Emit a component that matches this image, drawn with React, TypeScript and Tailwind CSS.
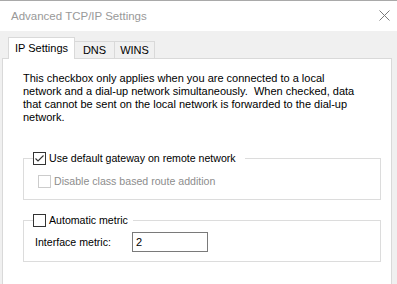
import React from "react";

function Check({ checked, disabled }: { checked?: boolean; disabled?: boolean }) {
  return (
    <span
      className={
        "inline-block w-[13px] h-[13px] shrink-0 border bg-white " +
        (disabled ? "border-[#cccccc]" : "border-[#333333]")
      }
    >
      {checked && (
        <svg width="11" height="11" viewBox="0 0 11 11" className="block">
          <path d="M1.5 5.5 L4 8 L9.5 2.5" fill="none" stroke="#333333" strokeWidth="1.1" />
        </svg>
      )}
    </span>
  );
}

export default function App() {
  return (
    <div
      className="w-[397px] h-[284px] overflow-hidden bg-[#f0f0f0] text-[11px] leading-[13px] text-black"
      style={{ fontFamily: '"Liberation Sans", Arial, sans-serif' }}
    >
      {/* title bar */}
      <div className="h-[31px] bg-white border-t border-[#a9a9a9] flex items-center justify-between pl-[11px] pr-[7px]">
        <span className="text-[11.5px] text-[#999999]">Advanced TCP/IP Settings</span>
        <svg width="11" height="11" viewBox="0 0 11 11" className="mb-[1px]">
          <path d="M0.5 0.5 L10.5 10.5 M10.5 0.5 L0.5 10.5" stroke="#7a7a7a" strokeWidth="1" />
        </svg>
      </div>

      {/* tabs */}
      <div className="mt-[6px] pl-[8px] flex items-end h-[21px]">
        <div className="relative z-10 -mb-[1px] h-[22px] w-[67px] bg-white border border-b-0 border-[#d9d9d9] flex items-center justify-center pb-[1px]">
          IP Settings
        </div>
        <div className="h-[17px] w-[40px] border-t border-r border-[#d9d9d9] flex items-center justify-center">
          DNS
        </div>
        <div className="h-[17px] w-[40px] border-t border-r border-[#d9d9d9] flex items-center justify-center">
          WINS
        </div>
      </div>

      {/* panel */}
      <div className="ml-[2px] w-[390px] h-[240px] bg-white border border-[#d9d9d9] pl-[20px] pr-[10px] pt-[13px]">
        <p className="w-[340px]">
          This checkbox only applies when you are connected to a local network and a dial-up network
          simultaneously.&nbsp; When checked, data that cannot be sent on the local network is
          forwarded to the dial-up network.
        </p>

        <fieldset className="mt-[28px] w-[358px] h-[48px] border border-[#dcdcdc] pl-[9px] text-[10.6px]">
          <legend className="flex items-center gap-[3px] pr-[9px]">
            <Check checked />
            <span>Use default gateway on remote network</span>
          </legend>
          <div className="mt-[10px] ml-[5px] flex items-center gap-[3px] text-[#8d8d8d]">
            <Check disabled />
            <span>Disable class based route addition</span>
          </div>
        </fieldset>

        <fieldset className="mt-[14px] w-[358px] h-[48px] border border-[#dcdcdc] pl-[9px] text-[10.6px]">
          <legend className="flex items-center gap-[3px] pr-[5px]">
            <Check />
            <span>Automatic metric</span>
          </legend>
          <div className="mt-[5px] ml-[2px] flex items-center">
            <span className="w-[97px]">Interface metric:</span>
            <div className="w-[76px] h-[20px] border border-[#7a7a7a] bg-white flex items-center pl-[3px] text-[11px]">
              2
            </div>
          </div>
        </fieldset>
      </div>
    </div>
  );
}
